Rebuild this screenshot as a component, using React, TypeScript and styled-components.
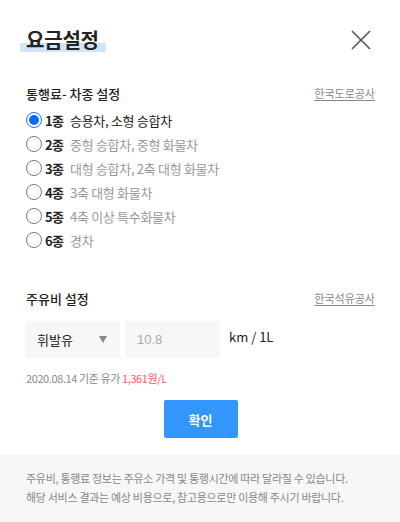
import React, { useState } from 'react';
import styled, { createGlobalStyle } from 'styled-components';

const GlobalStyle = createGlobalStyle`
  html, body {
    margin: 0;
    padding: 0;
    background: #fff;
  }
  body {
    font-family: "Noto Sans CJK KR", "Noto Sans", sans-serif;
    color: #222;
  }
`;

const Modal = styled.div`
  width: 400px;
  height: 522px;
  display: flex;
  flex-direction: column;
  background: #fff;
`;

const Body = styled.div`
  flex: 1;
  padding: 0 25px 0 26px;
  display: flex;
  flex-direction: column;
`;

const Header = styled.div`
  display: flex;
  justify-content: space-between;
  align-items: center;
  height: 80px;
`;

const Title = styled.h1`
  position: relative;
  margin: 0;
  font-size: 20px;
  font-weight: 700;
  letter-spacing: -0.2px;
  line-height: 26px;
  z-index: 0;
  &::after {
    content: '';
    position: absolute;
    left: -6px;
    right: -7px;
    top: 16px;
    height: 9px;
    background: #cfe5fb;
    z-index: -1;
  }
`;

const CloseButton = styled.button`
  border: 0;
  background: none;
  padding: 0;
  width: 24px;
  height: 24px;
  margin-right: 2px;
  cursor: pointer;
`;

const SectionHead = styled.div`
  display: flex;
  justify-content: space-between;
  align-items: center;
  height: 26px;
`;

const SectionTitle = styled.h2`
  margin: 0;
  font-size: 13px;
  font-weight: 500;
  color: #222;
`;

const SourceLink = styled.a`
  font-size: 11px;
  color: #888;
  text-decoration: underline;
  text-underline-offset: 2px;
`;

const RadioList = styled.ul`
  list-style: none;
  margin: 2px 0 0;
  padding: 0;
  display: flex;
  flex-direction: column;
`;

const RadioRow = styled.li`
  display: flex;
  align-items: center;
  height: 24px;
  cursor: pointer;
`;

const RadioMark = styled.span<{ $on: boolean }>`
  box-sizing: border-box;
  width: 16px;
  height: 16px;
  border-radius: 50%;
  border: 1px solid ${(p) => (p.$on ? '#1a73e8' : '#767676')};
  display: flex;
  align-items: center;
  justify-content: center;
  margin-right: 3px;
  &::after {
    content: '';
    width: 10px;
    height: 10px;
    border-radius: 50%;
    background: ${(p) => (p.$on ? '#0a6cff' : 'transparent')};
  }
`;

const Grade = styled.span`
  font-size: 13px;
  font-weight: 700;
  letter-spacing: -0.6px;
  color: #222;
  width: 25px;
`;

const Desc = styled.span<{ $on: boolean }>`
  font-size: 13px;
  color: ${(p) => (p.$on ? '#222' : '#999')};
  letter-spacing: -0.3px;
`;

const FuelSection = styled.div`
  margin-top: 33px;
`;

const FuelRow = styled.div`
  display: flex;
  align-items: center;
  gap: 5px;
  margin-top: 10px;
`;

const Select = styled.div`
  box-sizing: border-box;
  width: 95px;
  height: 37px;
  background: #f7f7f7;
  border-radius: 2px;
  display: flex;
  align-items: center;
  justify-content: space-between;
  padding: 0 13px 0 12px;
  font-size: 13px;
  color: #222;
  margin-left: -1px;
`;

const Caret = styled.span`
  width: 0;
  height: 0;
  border-left: 4px solid transparent;
  border-right: 4px solid transparent;
  border-top: 7px solid #888;
`;

const NumberBox = styled.div`
  box-sizing: border-box;
  width: 95px;
  height: 37px;
  background: #f7f7f7;
  border-radius: 2px;
  display: flex;
  align-items: center;
  padding-left: 12px;
  font-size: 13px;
  color: #aaa;
  font-family: "Liberation Sans", "Noto Sans", sans-serif;
`;

const Unit = styled.span`
  margin-left: 4px;
  margin-top: -6px;
  font-size: 13px;
  color: #222;
`;

const PriceNote = styled.p`
  margin: 12px 0 0;
  font-size: 11px;
  color: #888;
  letter-spacing: -0.4px;
  em {
    font-style: normal;
    color: #ff5c5c;
  }
`;

const ConfirmButton = styled.button`
  align-self: center;
  margin-top: 14px;
  width: 74px;
  height: 38px;
  border: 0;
  border-radius: 2px;
  background: #3396ff;
  color: #fff;
  font-family: inherit;
  font-size: 13px;
  font-weight: 700;
  cursor: pointer;
`;

const Footer = styled.div`
  flex-shrink: 0;
  height: 67px;
  background: #f7f7f7;
  padding: 14px 26px 0;
  box-sizing: border-box;
  font-size: 11px;
  line-height: 19px;
  color: #888;
  letter-spacing: -0.3px;
`;

const vehicles = [
  { grade: '1종', desc: '승용차, 소형 승합차' },
  { grade: '2종', desc: '중형 승합차, 중형 화물차' },
  { grade: '3종', desc: '대형 승합차, 2축 대형 화물차' },
  { grade: '4종', desc: '3축 대형 화물차' },
  { grade: '5종', desc: '4축 이상 특수화물차' },
  { grade: '6종', desc: '경차' },
];

const App = () => {
  const [selected, setSelected] = useState(0);

  return (
    <Modal>
      <GlobalStyle />
      <Body>
        <Header>
          <Title>요금설정</Title>
          <CloseButton aria-label="닫기">
            <svg width="24" height="24" viewBox="0 0 24 24">
              <path d="M3 3L21 21M21 3L3 21" stroke="#555" strokeWidth="1.6" fill="none" />
            </svg>
          </CloseButton>
        </Header>

        <SectionHead>
          <SectionTitle>통행료- 차종 설정</SectionTitle>
          <SourceLink>한국도로공사</SourceLink>
        </SectionHead>
        <RadioList>
          {vehicles.map((v, i) => (
            <RadioRow key={v.grade} onClick={() => setSelected(i)}>
              <RadioMark $on={selected === i} />
              <Grade>{v.grade}</Grade>
              <Desc $on={i === 0}>{v.desc}</Desc>
            </RadioRow>
          ))}
        </RadioList>

        <FuelSection>
          <SectionHead>
            <SectionTitle>주유비 설정</SectionTitle>
            <SourceLink>한국석유공사</SourceLink>
          </SectionHead>
          <FuelRow>
            <Select>
              휘발유
              <Caret />
            </Select>
            <NumberBox>10.8</NumberBox>
            <Unit>km / 1L</Unit>
          </FuelRow>
          <PriceNote>
            2020.08.14 기준 유가 <em>1,361원/L</em>
          </PriceNote>
        </FuelSection>

        <ConfirmButton>확인</ConfirmButton>
      </Body>
      <Footer>
        주유비, 통행료 정보는 주유소 가격 및 통행시간에 따라 달라질 수 있습니다.
        <br />
        해당 서비스 결과는 예상 비용으로, 참고용으로만 이용해 주시기 바랍니다.
      </Footer>
    </Modal>
  );
};

export default App;
